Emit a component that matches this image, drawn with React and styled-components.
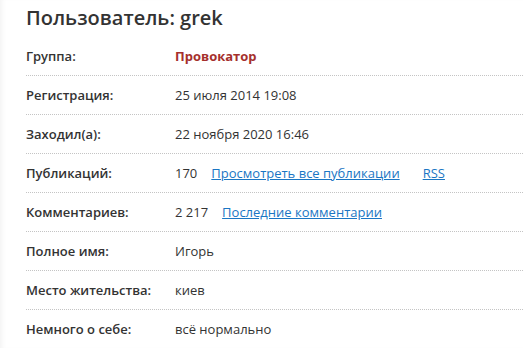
import React from 'react';
import styled, { createGlobalStyle } from 'styled-components';

const GlobalStyle = createGlobalStyle`
  html, body {
    margin: 0;
    padding: 0;
    background: #ffffff;
  }
  body {
    font-family: "Open Sans", "Noto Sans", sans-serif;
    color: #333333;
  }
`;

const Page = styled.div`
  min-height: 348px;
  padding: 0 0 0 26px;
  box-shadow: inset 5px 0 5px -3px rgba(0, 0, 0, 0.05);
  overflow: hidden;
`;

const Title = styled.h1`
  margin: 0;
  height: 37px;
  font-size: 20px;
  font-weight: 600;
  line-height: 35px;
  color: #333333;
`;

const InfoList = styled.div`
  display: flex;
  flex-direction: column;
`;

const Row = styled.div`
  display: grid;
  grid-template-columns: 149px 1fr;
  align-items: center;
  height: 38px;
  font-size: 13px;
  line-height: 18px;
  border-bottom: ${({ $last }) => ($last ? 'none' : '1px dotted #c4c4c4')};
`;

const Label = styled.div`
  font-weight: 600;
  color: #333333;
`;

const Value = styled.div`
  display: flex;
  align-items: center;
  color: ${({ $accent }) => ($accent ? '#a5302c' : '#333333')};
  font-weight: ${({ $accent }) => ($accent ? 700 : 400)};
  white-space: nowrap;
`;

const Count = styled.span`
  margin-right: ${({ $gap }) => $gap}px;
`;

const StyledLink = styled.a`
  color: #1a76c4;
  text-decoration: underline;
  margin-right: ${({ $gap }) => $gap || 0}px;
`;

const App = () => {
  return (
    <>
      <GlobalStyle />
      <Page>
        <Title>Пользователь: grek</Title>
        <InfoList>
          <Row>
            <Label>Группа:</Label>
            <Value $accent>Провокатор</Value>
          </Row>
          <Row>
            <Label>Регистрация:</Label>
            <Value>25 июля 2014 19:08</Value>
          </Row>
          <Row>
            <Label>Заходил(а):</Label>
            <Value>22 ноября 2020 16:46</Value>
          </Row>
          <Row>
            <Label>Публикаций:</Label>
            <Value>
              <Count $gap={14}>170</Count>
              <StyledLink href="#" $gap={23}>Просмотреть все публикации</StyledLink>
              <StyledLink href="#">RSS</StyledLink>
            </Value>
          </Row>
          <Row>
            <Label>Комментариев:</Label>
            <Value>
              <Count $gap={14}>2 217</Count>
              <StyledLink href="#">Последние комментарии</StyledLink>
            </Value>
          </Row>
          <Row>
            <Label>Полное имя:</Label>
            <Value>Игорь</Value>
          </Row>
          <Row>
            <Label>Место жительства:</Label>
            <Value>киев</Value>
          </Row>
          <Row $last>
            <Label>Немного о себе:</Label>
            <Value>всё нормально</Value>
          </Row>
        </InfoList>
      </Page>
    </>
  );
};

export default App;
